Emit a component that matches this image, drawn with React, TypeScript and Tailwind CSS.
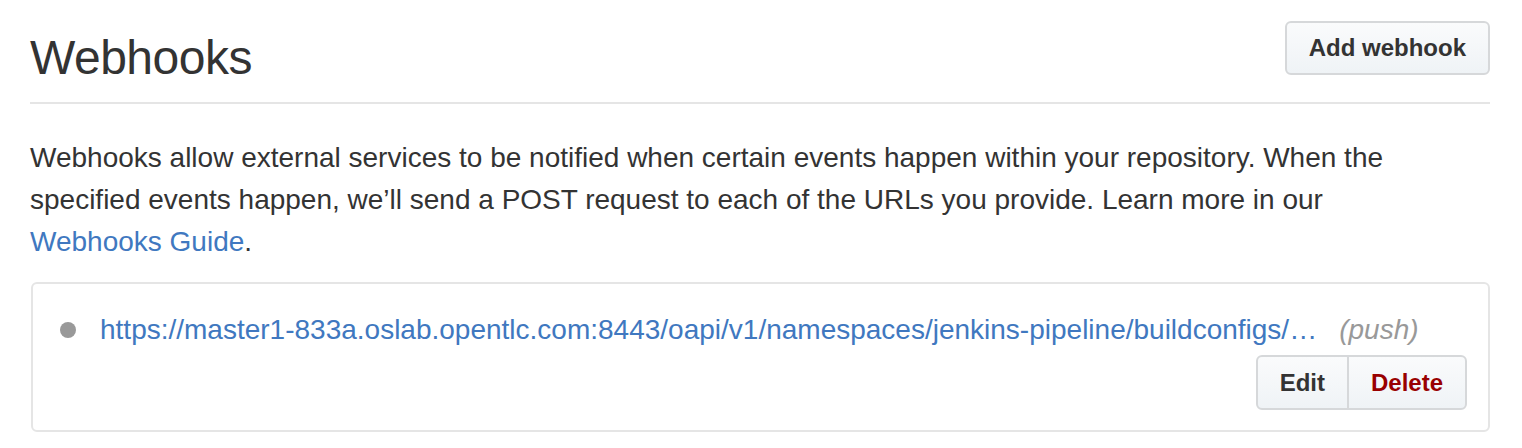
const url =
  "https://master1-833a.oslab.opentlc.com:8443/oapi/v1/namespaces/jenkins-pipeline/buildconfigs/…";

const btn =
  "h-[55px] px-[22px] text-[24px] font-bold bg-gradient-to-b from-[#fafbfc] to-[#eff3f6] border-2 border-[#d6d8da]";

export default function App() {
  return (
    <div className="bg-white min-h-screen pl-[30px] pr-[32px] text-[#333] font-['Liberation_Sans',Arial,sans-serif]">
      <div className="flex justify-between items-start pt-[21px] pb-[14px] border-b-2 border-[#e5e5e5]">
        <h2 className="mt-[7px] text-[48px] leading-[60px] font-normal tracking-[-0.5px]">Webhooks</h2>
        <button className="h-[54px] px-[22px] text-[24px] font-bold text-[#333] rounded-[6px] border-2 border-[#d6d8da] bg-gradient-to-b from-[#fafbfc] to-[#eff3f6]">
          Add webhook
        </button>
      </div>

      <p className="mt-[33px] text-[28px] leading-[42px]">
        Webhooks allow external services to be notified when certain events happen within your repository. When the
        <br />
        specified events happen, we’ll send a POST request to each of the URLs you provide. Learn more in our
        <br />
        <a className="text-[#4078c0]" href="#">Webhooks Guide</a>.
      </p>

      <div className="mt-[19px] ml-px border-2 border-[#e5e5e5] rounded-[6px] pt-[25px] pb-[20px] pl-[27px] pr-[21px]">
        <div className="flex items-center text-[28px] leading-[42px] whitespace-nowrap">
          <span className="w-4 h-4 rounded-full bg-[#999] shrink-0" />
          <a href="#" className="ml-[24px] text-[#4078c0]">
            {url}
          </a>
          <span className="ml-[22px] italic text-[#999]">(push)</span>
        </div>
        <div className="flex justify-end mt-[4px]">
          <button className={`${btn} rounded-l-[6px] text-[#333]`}>Edit</button>
          <button className={`${btn} -ml-[2px] rounded-r-[6px] text-[#990000]`}>Delete</button>
        </div>
      </div>
    </div>
  );
}
